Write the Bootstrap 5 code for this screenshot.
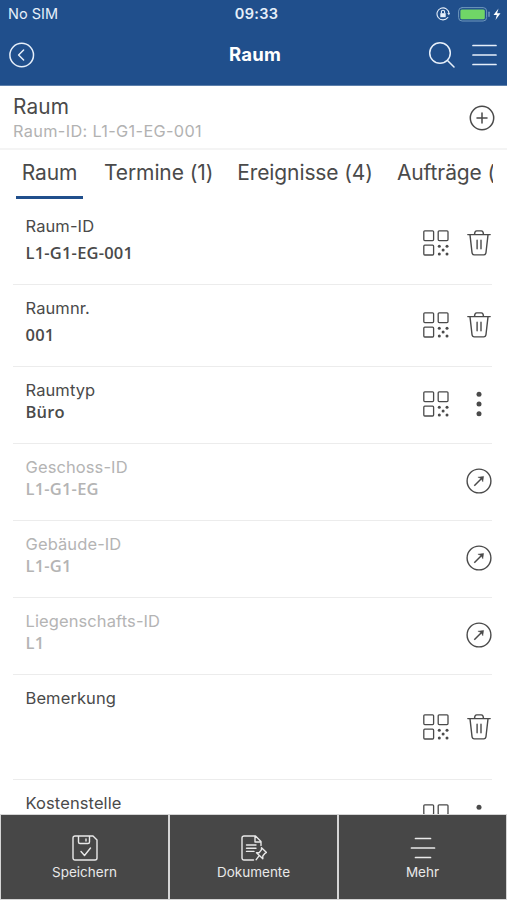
<!DOCTYPE html>
<html lang="de">
<head>
<meta charset="utf-8">
<meta name="viewport" content="width=device-width, initial-scale=1">
<title>Raum</title>
<link href="https://cdn.jsdelivr.net/npm/bootstrap@5.3.0/dist/css/bootstrap.min.css" rel="stylesheet">
<style>
  body { font-family: Inter, "Liberation Sans", sans-serif; color: #4a4a4a; }
  svg { display: block; flex: none; fill: none; stroke: currentColor; stroke-linecap: round; stroke-linejoin: round; }
  .app-header { background: #204f8c; color: #e6effa; height: 86px; border-bottom: 1px solid #5c7fab; }
  .status { height: 28px; padding: 0 6px 0 8px; font-size: 14.5px; line-height: 28px; }
  .status > *, .title-bar > * { flex: 1 1 0; }
  .status-time { letter-spacing: .3px; }
  .title-bar { height: 54px; padding: 0 10px 0 9px; }
  .page-title { font-size: 18.5px; font-weight: 700; color: #fff; letter-spacing: .25px; padding-left: 4px; }
  .subhead { height: 64px; padding: 8px 12px 0 13px; border-bottom: 2px solid #f4f4f4; }
  .subhead svg { margin-top: 11px; }
  .subhead-name { font-size: 20.8px; line-height: 26px; letter-spacing: .2px; }
  .subhead-id { font-size: 16.3px; line-height: 22px; letter-spacing: .35px; color: #b2b2b2; }
  .tab-strip { height: 53px; margin: 0 14px 0 16px; gap: 21px; font-size: 21px; line-height: 46px; letter-spacing: -.1px; white-space: nowrap; }
  .tab-strip .nav-link { color: inherit; padding: 0; height: 49px; flex: none; }
  .tab-strip .nav-link + .nav-link + .nav-link { margin-left: 3px; }
  .tab-strip .active { border-bottom: 3px solid #204f8c; width: 67px; text-align: center; }
  .fields { min-height: 0; }
  .field { height: 77px; margin: 0 15px 0 13px; padding: 12px 0 0 12.500px; border-bottom: 1px solid #ececec; }
  .field-label { font-size: 16.5px; line-height: 22px; letter-spacing: .1px; }
  .field-value { font-family: "Open Sans", sans-serif; font-weight: 600; font-size: 16.500px; line-height: 22px; letter-spacing: .2px; }
  .field-tall { height: 82px; }
  .field-tall .field-value { line-height: 32px; }
  .field-note { height: 105px; }
  .field-locked { color: #b4b4b4; }
  .actions { gap: 17px; height: 50px; color: #4a4a4a; }
  .actions > * { width: 26px; }
  .field-tall .actions { height: 55px; }
  .field-note .actions { height: 79px; }
  .bottom-bar { height: 86px; gap: 2px; padding: 1px; background: #d5d5d5; }
  .bottom-btn { background: #474747; color: #e9e9e9; font-size: 13.500px; line-height: 20px; padding: 20px 0 0; border: 0; gap: 1px; }
</style>
</head>
<body class="vh-100 overflow-hidden bg-white">
<svg width="0" height="0" class="position-absolute" aria-hidden="true">
  <symbol id="qr" viewBox="0 0 26 26">
    <g stroke-width="1.3"><rect x=".8" y=".8" width="9.800" height="9.800" rx="1"/><rect x="15.200" y=".8" width="9.800" height="9.800" rx="1"/><rect x=".8" y="15.200" width="9.800" height="9.800" rx="1"/></g>
    <g fill="currentColor" stroke="none"><circle cx="16.3" cy="16.3" r="1.500"/><circle cx="24" cy="16.3" r="1.500"/><circle cx="20.100" cy="20.100" r="1.500"/><circle cx="16.300" cy="24" r="1.500"/><circle cx="24" cy="24" r="1.500"/></g>
  </symbol>
  <symbol id="trash" viewBox="0 0 24 26">
    <path stroke-width="1.4" d="M.8 4.600h22.400M7.500 4.400c.2-2.300.8-3.500 2.100-3.500h4.800c1.300 0 1.900 1.200 2.100 3.500M3 4.900l2 17.600c.2 1.700.9 2.400 2.300 2.400h9.400c1.400 0 2.100-.7 2.300-2.400l2-17.600M10.100 10.300v8.400M14 10.300v8.400"/>
  </symbol>
  <symbol id="dots" viewBox="0 0 6 26"><g fill="currentColor" stroke="none"><circle cx="3" cy="3.300" r="2.500"/><circle cx="3" cy="13" r="2.500"/><circle cx="3" cy="22.700" r="2.500"/></g></symbol>
  <symbol id="open" viewBox="0 0 26 26">
    <circle cx="13" cy="13" r="11.900" stroke-width="1.400"/><path stroke-width="1.500" stroke-linecap="butt" d="M8.300 17.800 16 10"/><path d="m12.300 9.200 5.300-.8-.8 5.300-1.500-3z" fill="currentColor" stroke-width=".5"/>
  </symbol>
</svg>
<div class="d-flex flex-column h-100">
  <header class="app-header flex-shrink-0">
    <div class="status d-flex">
      <span>No SIM</span>
      <span class="status-time text-center fw-semibold ps-1">09:33</span>
      <span class="d-flex justify-content-end align-items-center gap-2">
        <svg width="14" height="14" viewBox="0 0 14 14" stroke-width="1.100"><path d="M11.800 10.500A6 6 0 1 1 13 6.500"/><path d="m11.200 6.200 1.800 2 1-2.100z" fill="currentColor" stroke="none"/><rect x="4.300" y="6.200" width="5.400" height="4" fill="currentColor" stroke="none"/><path d="M5.400 6V4.800a1.600 1.600 0 0 1 3.200 0V6"/></svg>
        <svg width="43" height="15" viewBox="0 0 43 15"><rect x=".6" y=".6" width="28" height="13.400" rx="3.500" stroke="#6f98bd" stroke-width="1"/><rect x="2.400" y="2.400" width="24.400" height="9.800" rx="1.500" fill="#70d667" stroke="none"/><path d="M31 5.300v4" stroke="#6f98bd" stroke-width="1.500"/><path d="m40.500 1.500-5 6.500h3.300L37.500 13l5-6.700h-3.400z" fill="#fff" stroke="none"/></svg>
      </span>
    </div>
    <div class="title-bar d-flex align-items-center">
      <span><svg width="26" height="26" viewBox="0 0 26 26" stroke-width="1.500"><circle cx="12.700" cy="13" r="11.800"/><path d="m14.600 8-5 5 5 5"/></svg></span>
      <span class="page-title text-center">Raum</span>
      <span class="d-flex justify-content-end align-items-center">
        <svg width="28" height="28" viewBox="0 0 28 28" stroke-width="1.500" class="me-3"><circle cx="12" cy="12" r="10.300"/><path d="m19.500 19.500 6.500 6.500"/></svg>
        <svg width="25" height="22" viewBox="0 0 25 22" stroke-width="1.700"><path d="M1 1.500h23M1 11h23M1 20.500h23"/></svg>
      </span>
    </div>
  </header>
  <section class="subhead d-flex justify-content-between flex-shrink-0">
    <div><div class="subhead-name">Raum</div><div class="subhead-id">Raum-ID: L1-G1-EG-001</div></div>
    <svg width="26" height="26" viewBox="0 0 26 26" stroke-width="1.500"><circle cx="13" cy="13" r="11.700"/><path d="M8 13h10M13 8v10"/></svg>
  </section>
  <nav class="tab-strip nav flex-nowrap overflow-hidden flex-shrink-0">
    <a class="nav-link active">Raum</a><a class="nav-link">Termine (1)</a><a class="nav-link">Ereignisse (4)</a><a class="nav-link">Aufträge (</a>
  </nav>
  <main class="fields flex-grow-1 overflow-hidden">
    <div class="field field-tall d-flex justify-content-between"><div><div class="field-label">Raum-ID</div><div class="field-value">L1-G1-EG-001</div></div>
      <div class="actions d-flex align-items-center"><svg height="26"><use href="#qr"/></svg><svg height="26"><use href="#trash"/></svg></div></div>
    <div class="field field-tall d-flex justify-content-between"><div><div class="field-label">Raumnr.</div><div class="field-value">001</div></div>
      <div class="actions d-flex align-items-center"><svg height="26"><use href="#qr"/></svg><svg height="26"><use href="#trash"/></svg></div></div>
    <div class="field d-flex justify-content-between"><div><div class="field-label">Raumtyp</div><div class="field-value">Büro</div></div>
      <div class="actions d-flex align-items-center"><svg height="26"><use href="#qr"/></svg><svg height="26"><use href="#dots"/></svg></div></div>
    <div class="field field-locked d-flex justify-content-between"><div><div class="field-label">Geschoss-ID</div><div class="field-value">L1-G1-EG</div></div>
      <div class="actions d-flex align-items-center"><svg height="26"><use href="#open"/></svg></div></div>
    <div class="field field-locked d-flex justify-content-between"><div><div class="field-label">Gebäude-ID</div><div class="field-value">L1-G1</div></div>
      <div class="actions d-flex align-items-center"><svg height="26"><use href="#open"/></svg></div></div>
    <div class="field field-locked d-flex justify-content-between"><div><div class="field-label">Liegenschafts-ID</div><div class="field-value">L1</div></div>
      <div class="actions d-flex align-items-center"><svg height="26"><use href="#open"/></svg></div></div>
    <div class="field field-note d-flex justify-content-between"><div class="field-label">Bemerkung</div>
      <div class="actions d-flex align-items-center"><svg height="26"><use href="#qr"/></svg><svg height="26"><use href="#trash"/></svg></div></div>
    <div class="field d-flex justify-content-between"><div class="field-label">Kostenstelle</div>
      <div class="actions d-flex align-items-center"><svg height="26"><use href="#qr"/></svg><svg height="26"><use href="#dots"/></svg></div></div>
  </main>
  <footer class="bottom-bar d-flex flex-shrink-0">
    <button class="bottom-btn col d-flex flex-column align-items-center"><svg width="26" height="26" viewBox="0 0 26 26" stroke-width="1.400"><path d="M3 1h18l4 4v18a2 2 0 0 1-2 2H3a2 2 0 0 1-2-2V3a2 2 0 0 1 2-2zM6.500 1v6a1.500 1.500 0 0 0 1.500 1.500h8A1.500 1.500 0 0 0 17.500 7V1M14 4v2M9 16.500l3.500 4 6-7.500"/></svg><span>Speichern</span></button>
    <button class="bottom-btn col d-flex flex-column align-items-center"><svg width="26" height="26" viewBox="0 0 26 26" stroke-width="1.400"><path d="M12.500 25H3a2 2 0 0 1-2-2V3a2 2 0 0 1 2-2h11.500L20 6.500v4M14 1.500V7h5.500M5.500 10h9.500M5.500 13.200h9.500M5.500 16.400h7.500"/><path d="m20.500 12.800 5 4.700-1.500.8-2.200 2.700v2.700l-6.300-6h2.700l2.200-2.900zM18.200 20.700l-3 4"/></svg><span>Dokumente</span></button>
    <button class="bottom-btn col d-flex flex-column align-items-center"><svg width="26" height="26" viewBox="0 0 26 26" stroke-width="1.700"><path d="M5.500 3.500h15M1.500 13h23M5.500 22.500h15"/></svg><span>Mehr</span></button>
  </footer>
</div>
<script src="https://cdn.jsdelivr.net/npm/bootstrap@5.3.0/dist/js/bootstrap.bundle.min.js"></script>
</body>
</html>
